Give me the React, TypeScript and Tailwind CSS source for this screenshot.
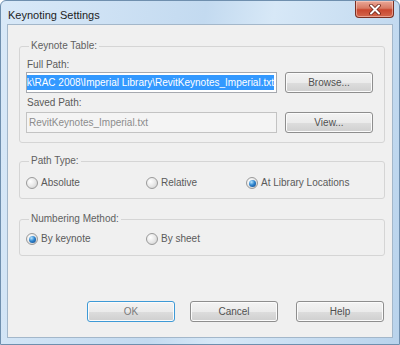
import React from 'react';

const Radio: React.FC<{ label: string; checked?: boolean; className?: string }> = ({ label, checked, className }) => (
  <div className={`flex items-center gap-[3px] ${className ?? ''}`}>
    <span className="w-[12px] h-[12px] rounded-full border border-[#9a9a9a] bg-[radial-gradient(circle_at_35%_35%,#ffffff,#e6e6e6_55%,#c8c8c8)] flex items-center justify-center">
      {checked && (
        <span className="w-[7px] h-[7px] rounded-full bg-[radial-gradient(circle_at_35%_30%,#b8e6ff,#2f86d0_45%,#0d3f80)]" />
      )}
    </span>
    <span className="leading-[14px]">{label}</span>
  </div>
);

const Button: React.FC<{ label: string; primary?: boolean; className?: string }> = ({ label, primary, className }) => (
  <button
    className={`w-[88px] h-[21px] rounded-[3px] border flex items-center justify-center leading-none bg-[linear-gradient(#f3f3f3,#ebebeb_50%,#dddddd_51%,#cfcfcf)] shadow-[inset_0_0_0_1px_#fbfbfb] ${
      primary ? 'border-[#3e9ad6] text-[#7a7a7a]' : 'border-[#8e8e8e] text-[#505050]'
    } ${className ?? ''}`}
  >
    {label}
  </button>
);

const Group: React.FC<{ title: string; className?: string; children: React.ReactNode }> = ({ title, className, children }) => (
  <fieldset className={`border border-[#d5d5d5] rounded-[3px] ${className ?? ''}`}>
    <legend className="ml-[3px] px-[2px] leading-[14px] text-[#606060]">{title}</legend>
    {children}
  </fieldset>
);

export default function App() {
  const fullPath =
    'C:\\Documents and Settings\\All Users\\Application Data\\Autodesk\\RAC 2008\\Imperial Library\\RevitKeynotes_Imperial.txt';

  return (
    <div className="w-[400px] h-[345px] bg-white font-['Liberation_Sans',Arial,sans-serif] text-[10px] text-[#5a5a5a]">
      <div className="w-[400px] h-[345px] flex flex-col border border-[#6f8fae] rounded-t-[6px] bg-[linear-gradient(100deg,#d9e9f8,#c3daf0_45%,#d7e8f7_60%,#b9d3ec)]">
        {/* title bar */}
        <div className="h-[23px] flex items-start justify-between">
          <div className="pl-[7px] pt-[7px] text-[11px] leading-[14px] text-[#1e1e1e]">Keynoting Settings</div>
          <div className="mr-[5px] w-[39px] h-[17px] rounded-b-[4px] border border-t-0 border-[#7a2f22] bg-[linear-gradient(#eaa898,#d77a64_45%,#c9472f_55%,#d3664c)] flex items-center justify-center shadow-[inset_0_0_0_1px_rgba(255,220,210,0.5)]">
            <svg width="12" height="11" viewBox="0 0 12 11">
              <path d="M2 1.5 L10 9.5 M10 1.5 L2 9.5" stroke="#6b2318" strokeWidth="3.6" strokeLinecap="round" />
              <path d="M2 1.5 L10 9.5 M10 1.5 L2 9.5" stroke="#ffffff" strokeWidth="2" strokeLinecap="round" />
            </svg>
          </div>
        </div>

        {/* client area */}
        <div className="mx-[6px] mb-[6px] flex-1 border border-[#a3b7ca] bg-[#f0f0f0] flex flex-col pl-[11px] pr-[7px]">
          <Group title="Keynote Table:" className="mt-[14px] pl-[6px] pr-[10px] pb-[9px]">
            <div className="pt-[5px] pl-[1px] leading-[14px]">Full Path:</div>
            <div className="flex items-center gap-[8px]">
              <div className="w-[251px] h-[21px] border border-[#a6a9af] bg-white flex items-center justify-end overflow-hidden pl-[1px] pr-[2px]">
                <span className="whitespace-nowrap bg-[#3399ff] text-white leading-[15px]">{fullPath}</span>
              </div>
              <Button label="Browse..." />
            </div>
            <div className="mt-[3px] pl-[1px] leading-[14px]">Saved Path:</div>
            <div className="mt-[2px] flex items-center gap-[8px]">
              <div className="w-[251px] h-[21px] border border-[#c3c3c3] bg-[#f4f4f4] flex items-center px-[2px] text-[#8c8c8c] whitespace-nowrap">
                RevitKeynotes_Imperial.txt
              </div>
              <Button label="View..." />
            </div>
          </Group>

          <Group title="Path Type:" className="mt-[11px] pl-[6px] pt-[8px] pb-[8px]">
            <div className="flex items-center">
              <Radio label="Absolute" className="w-[120px]" />
              <Radio label="Relative" className="w-[100px]" />
              <Radio label="At Library Locations" checked />
            </div>
          </Group>

          <Group title="Numbering Method:" className="mt-[13px] pl-[6px] pt-[6px] pb-[9px]">
            <div className="flex items-center">
              <Radio label="By keynote" checked className="w-[120px]" />
              <Radio label="By sheet" />
            </div>
          </Group>

          <div className="mt-auto mb-[15px] flex justify-end pr-[1px]">
            <Button label="OK" primary className="mr-[15px]" />
            <Button label="Cancel" className="mr-[18px]" />
            <Button label="Help" />
          </div>
        </div>
      </div>
    </div>
  );
}
